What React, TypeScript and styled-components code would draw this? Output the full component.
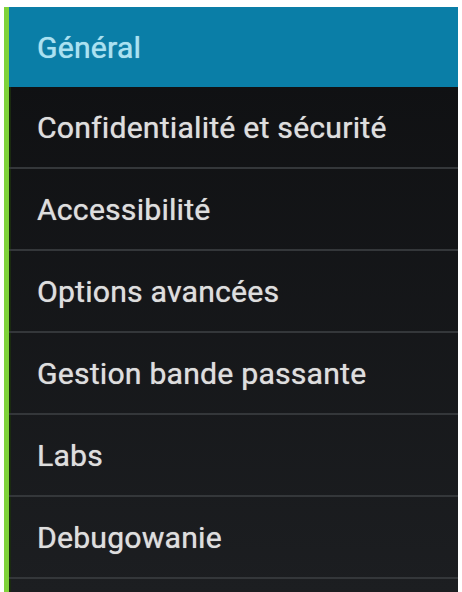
import React from 'react';
import styled, {createGlobalStyle} from 'styled-components';

const GlobalStyle = createGlobalStyle`
    html, body {
        margin: 0;
        padding: 0;
        background: #ffffff;
    }
    body {
        font-family: Roboto, "Noto Sans", sans-serif;
    }
`;

const Page = styled.div`
    width: 462px;
    height: 592px;
    padding: 7px 4px 0 4px;
    box-sizing: border-box;
    overflow: hidden;
`;

// settings drawer: green accent bar on the left edge
const Drawer = styled.nav`
    display: flex;
    flex-direction: column;
    height: 100%;
    border-left: 5px solid #7fd23a;
    background: linear-gradient(#0e0f11, #1c1e21);
    box-shadow: inset 2px 0 0 #1a2a10;
`;

const Item = styled.div<{active?: boolean}>`
    display: flex;
    align-items: center;
    flex: 0 0 ${props => props.active ? 80 : 82}px;
    box-sizing: border-box;
    padding-left: 28px;
    font-size: 30px;
    font-weight: 400;
    letter-spacing: 0.3px;
    color: ${props => props.active ? '#a9e2f2' : '#dedede'};
    background: ${props => props.active ? '#0a7ea7' : 'transparent'};
    border-bottom: ${props => props.active ? 'none' : '2px solid #34373a'};
    text-shadow: 0 0 1px rgba(255, 255, 255, 0.5), 0.4px 0 0 rgba(255, 255, 255, 0.4);
`;

const entries = [
    'Confidentialité et sécurité',
    'Accessibilité',
    'Options avancées',
    'Gestion bande passante',
    'Labs',
    'Debugowanie',
];

export default function App() {
    return (
        <>
            <GlobalStyle/>
            <Page>
                <Drawer>
                    <Item active>Général</Item>
                    {entries.map(label => (
                        <Item key={label}>{label}</Item>
                    ))}
                </Drawer>
            </Page>
        </>
    );
}
